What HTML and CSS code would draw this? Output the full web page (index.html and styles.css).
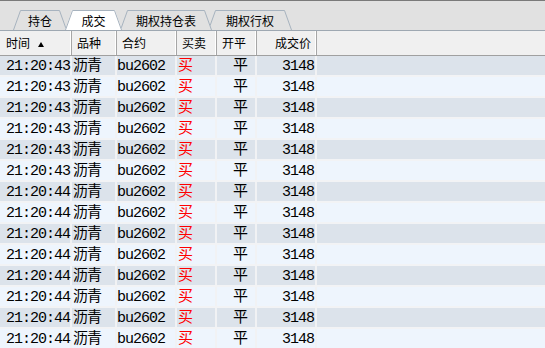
FILE: index.html
```html
<!DOCTYPE html>
<html lang="zh">
<head>
<meta charset="utf-8">
<link rel="stylesheet" href="styles.css">
</head>
<body>
<div class="tabbar">
  <div class="tab tab-1">
    <svg viewBox="0 0 54 20" preserveAspectRatio="none"><polygon class="fill" points="0,20 7,0 47,0 54,20"/><polyline class="edge" points="0.5,20 7.5,0.5 46.5,0.5 53.5,20"/></svg>
    <span>持仓</span>
  </div>
  <div class="tab tab-2 active">
    <svg viewBox="0 0 57 20" preserveAspectRatio="none"><polygon class="fill" points="0,20 7,0 50,0 57,20"/><polyline class="edge" points="0.5,20 7.5,0.5 49.5,0.5 56.5,20"/></svg>
    <span>成交</span>
  </div>
  <div class="tab tab-3">
    <svg viewBox="0 0 92 20" preserveAspectRatio="none"><polygon class="fill" points="0,20 7,0 85,0 92,20"/><polyline class="edge" points="0.5,20 7.5,0.5 84.5,0.5 91.5,20"/></svg>
    <span>期权持仓表</span>
  </div>
  <div class="tab tab-4">
    <svg viewBox="0 0 84 20" preserveAspectRatio="none"><polygon class="fill" points="0,20 7,0 77,0 84,20"/><polyline class="edge" points="0.5,20 7.5,0.5 76.5,0.5 83.5,20"/></svg>
    <span>期权行权</span>
  </div>
</div>

<div class="grid">
  <div class="row head">
    <div class="c c1">时间<i class="sort"></i></div>
    <div class="c c2">品种</div>
    <div class="c c3">合约</div>
    <div class="c c4">买卖</div>
    <div class="c c5">开平</div>
    <div class="c c6">成交价</div>
    <div class="fill-cell"></div>
  </div>
  <div class="row odd"><div class="c c1">21:20:43</div><div class="c c2">沥青</div><div class="c c3">bu2602</div><div class="c c4 buy">买</div><div class="c c5">平</div><div class="c c6">3148</div><div class="fill-cell"></div></div>
  <div class="row even"><div class="c c1">21:20:43</div><div class="c c2">沥青</div><div class="c c3">bu2602</div><div class="c c4 buy">买</div><div class="c c5">平</div><div class="c c6">3148</div><div class="fill-cell"></div></div>
  <div class="row odd"><div class="c c1">21:20:43</div><div class="c c2">沥青</div><div class="c c3">bu2602</div><div class="c c4 buy">买</div><div class="c c5">平</div><div class="c c6">3148</div><div class="fill-cell"></div></div>
  <div class="row even"><div class="c c1">21:20:43</div><div class="c c2">沥青</div><div class="c c3">bu2602</div><div class="c c4 buy">买</div><div class="c c5">平</div><div class="c c6">3148</div><div class="fill-cell"></div></div>
  <div class="row odd"><div class="c c1">21:20:43</div><div class="c c2">沥青</div><div class="c c3">bu2602</div><div class="c c4 buy">买</div><div class="c c5">平</div><div class="c c6">3148</div><div class="fill-cell"></div></div>
  <div class="row even"><div class="c c1">21:20:43</div><div class="c c2">沥青</div><div class="c c3">bu2602</div><div class="c c4 buy">买</div><div class="c c5">平</div><div class="c c6">3148</div><div class="fill-cell"></div></div>
  <div class="row odd"><div class="c c1">21:20:44</div><div class="c c2">沥青</div><div class="c c3">bu2602</div><div class="c c4 buy">买</div><div class="c c5">平</div><div class="c c6">3148</div><div class="fill-cell"></div></div>
  <div class="row even"><div class="c c1">21:20:44</div><div class="c c2">沥青</div><div class="c c3">bu2602</div><div class="c c4 buy">买</div><div class="c c5">平</div><div class="c c6">3148</div><div class="fill-cell"></div></div>
  <div class="row odd"><div class="c c1">21:20:44</div><div class="c c2">沥青</div><div class="c c3">bu2602</div><div class="c c4 buy">买</div><div class="c c5">平</div><div class="c c6">3148</div><div class="fill-cell"></div></div>
  <div class="row even"><div class="c c1">21:20:44</div><div class="c c2">沥青</div><div class="c c3">bu2602</div><div class="c c4 buy">买</div><div class="c c5">平</div><div class="c c6">3148</div><div class="fill-cell"></div></div>
  <div class="row odd"><div class="c c1">21:20:44</div><div class="c c2">沥青</div><div class="c c3">bu2602</div><div class="c c4 buy">买</div><div class="c c5">平</div><div class="c c6">3148</div><div class="fill-cell"></div></div>
  <div class="row even"><div class="c c1">21:20:44</div><div class="c c2">沥青</div><div class="c c3">bu2602</div><div class="c c4 buy">买</div><div class="c c5">平</div><div class="c c6">3148</div><div class="fill-cell"></div></div>
  <div class="row odd"><div class="c c1">21:20:44</div><div class="c c2">沥青</div><div class="c c3">bu2602</div><div class="c c4 buy">买</div><div class="c c5">平</div><div class="c c6">3148</div><div class="fill-cell"></div></div>
  <div class="row even"><div class="c c1">21:20:44</div><div class="c c2">沥青</div><div class="c c3">bu2602</div><div class="c c4 buy">买</div><div class="c c5">平</div><div class="c c6">3148</div><div class="fill-cell"></div></div>
</div>
</body>
</html>
```

FILE: styles.css
```css
* { box-sizing: border-box; }
html, body {
  margin: 0;
  padding: 0;
  background: #e1e1e1;
  overflow: hidden;
}
body {
  width: 545px;
  height: 348px;
  font-family: "Noto Sans CJK SC", sans-serif;
}

/* ---------- tabs ---------- */
.tabbar {
  height: 31px;
  border-top: 1px solid #7a7a7a;
  border-bottom: 1px solid #9ea8b2;
  background: #e1e1e1;
  display: flex;
  align-items: flex-end;
  padding: 9px 0 0 13px;
}
.tab {
  position: relative;
  height: 20px;
  display: flex;
  align-items: center;
  justify-content: center;
  font-size: 12px;
  color: #000;
}
.tab svg {
  position: absolute;
  left: 0;
  top: 0;
  width: 100%;
  height: 100%;
  overflow: visible;
}
.tab .fill { fill: #e1e1e1; }
.tab .edge { fill: none; stroke: #a7b3bf; stroke-width: 1; }
.tab.active .fill { fill: #ffffff; }
.tab span {
  position: relative;
  line-height: 20px;
  padding-top: 1px;
}
.tab-1 { width: 54px; z-index: 1; }
.tab-2 { width: 57px; margin-left: -2px; z-index: 4; }
.tab-3 { width: 92px; margin-left: -2px; z-index: 3; }
.tab-4 { width: 84px; margin-left: -4px; z-index: 2; }

/* ---------- grid ---------- */
.grid {
  display: flex;
  flex-direction: column;
}
.row {
  display: flex;
  height: 21px;
  border-bottom: 2px solid #f2f3f5;
  font-family: "Liberation Mono", "Noto Sans CJK SC", monospace;
  font-size: 15px;
  letter-spacing: -1px;
  line-height: 22px;
  color: #000;
}
.row.odd { background: #dce3eb; }
.row.even { background: #eef5fd; }

.c {
  flex: none;
  white-space: nowrap;
  border-right: 2px solid #f1f2f4;
}
.c1 { width: 72px; padding-left: 6px; }
.c2 { width: 45px; padding-left: 1px; }
.c3 { width: 60px; padding-left: 0; }
.c4 { width: 40px; padding-left: 1px; }
.c5 { width: 40px; padding-left: 16px; }
.c6 { width: 60px; text-align: right; padding-right: 1px; }
.fill-cell { flex: 1; }

.buy { color: #ff0000; }

/* header */
.row.head {
  height: 25px;
  background: #f0f0f0;
  border-bottom: 1px solid #a0a0a0;
  font-family: "Noto Sans CJK SC", sans-serif;
  font-size: 12px;
  letter-spacing: 0;
  line-height: 24px;
}
.row.head .c {
  border-right: 1px solid #a6a6a6;
  box-shadow: inset -1px 0 0 #ffffff;
  padding-left: 5px;
}
.row.head .c1 { padding-left: 6px; width: 72px; }
.row.head .c6 { padding-left: 0; padding-right: 5px; }

.sort {
  display: inline-block;
  width: 0;
  height: 0;
  border-left: 3px solid transparent;
  border-right: 3px solid transparent;
  border-bottom: 5px solid #000;
  margin-left: 8px;
  vertical-align: 1px;
}
```
